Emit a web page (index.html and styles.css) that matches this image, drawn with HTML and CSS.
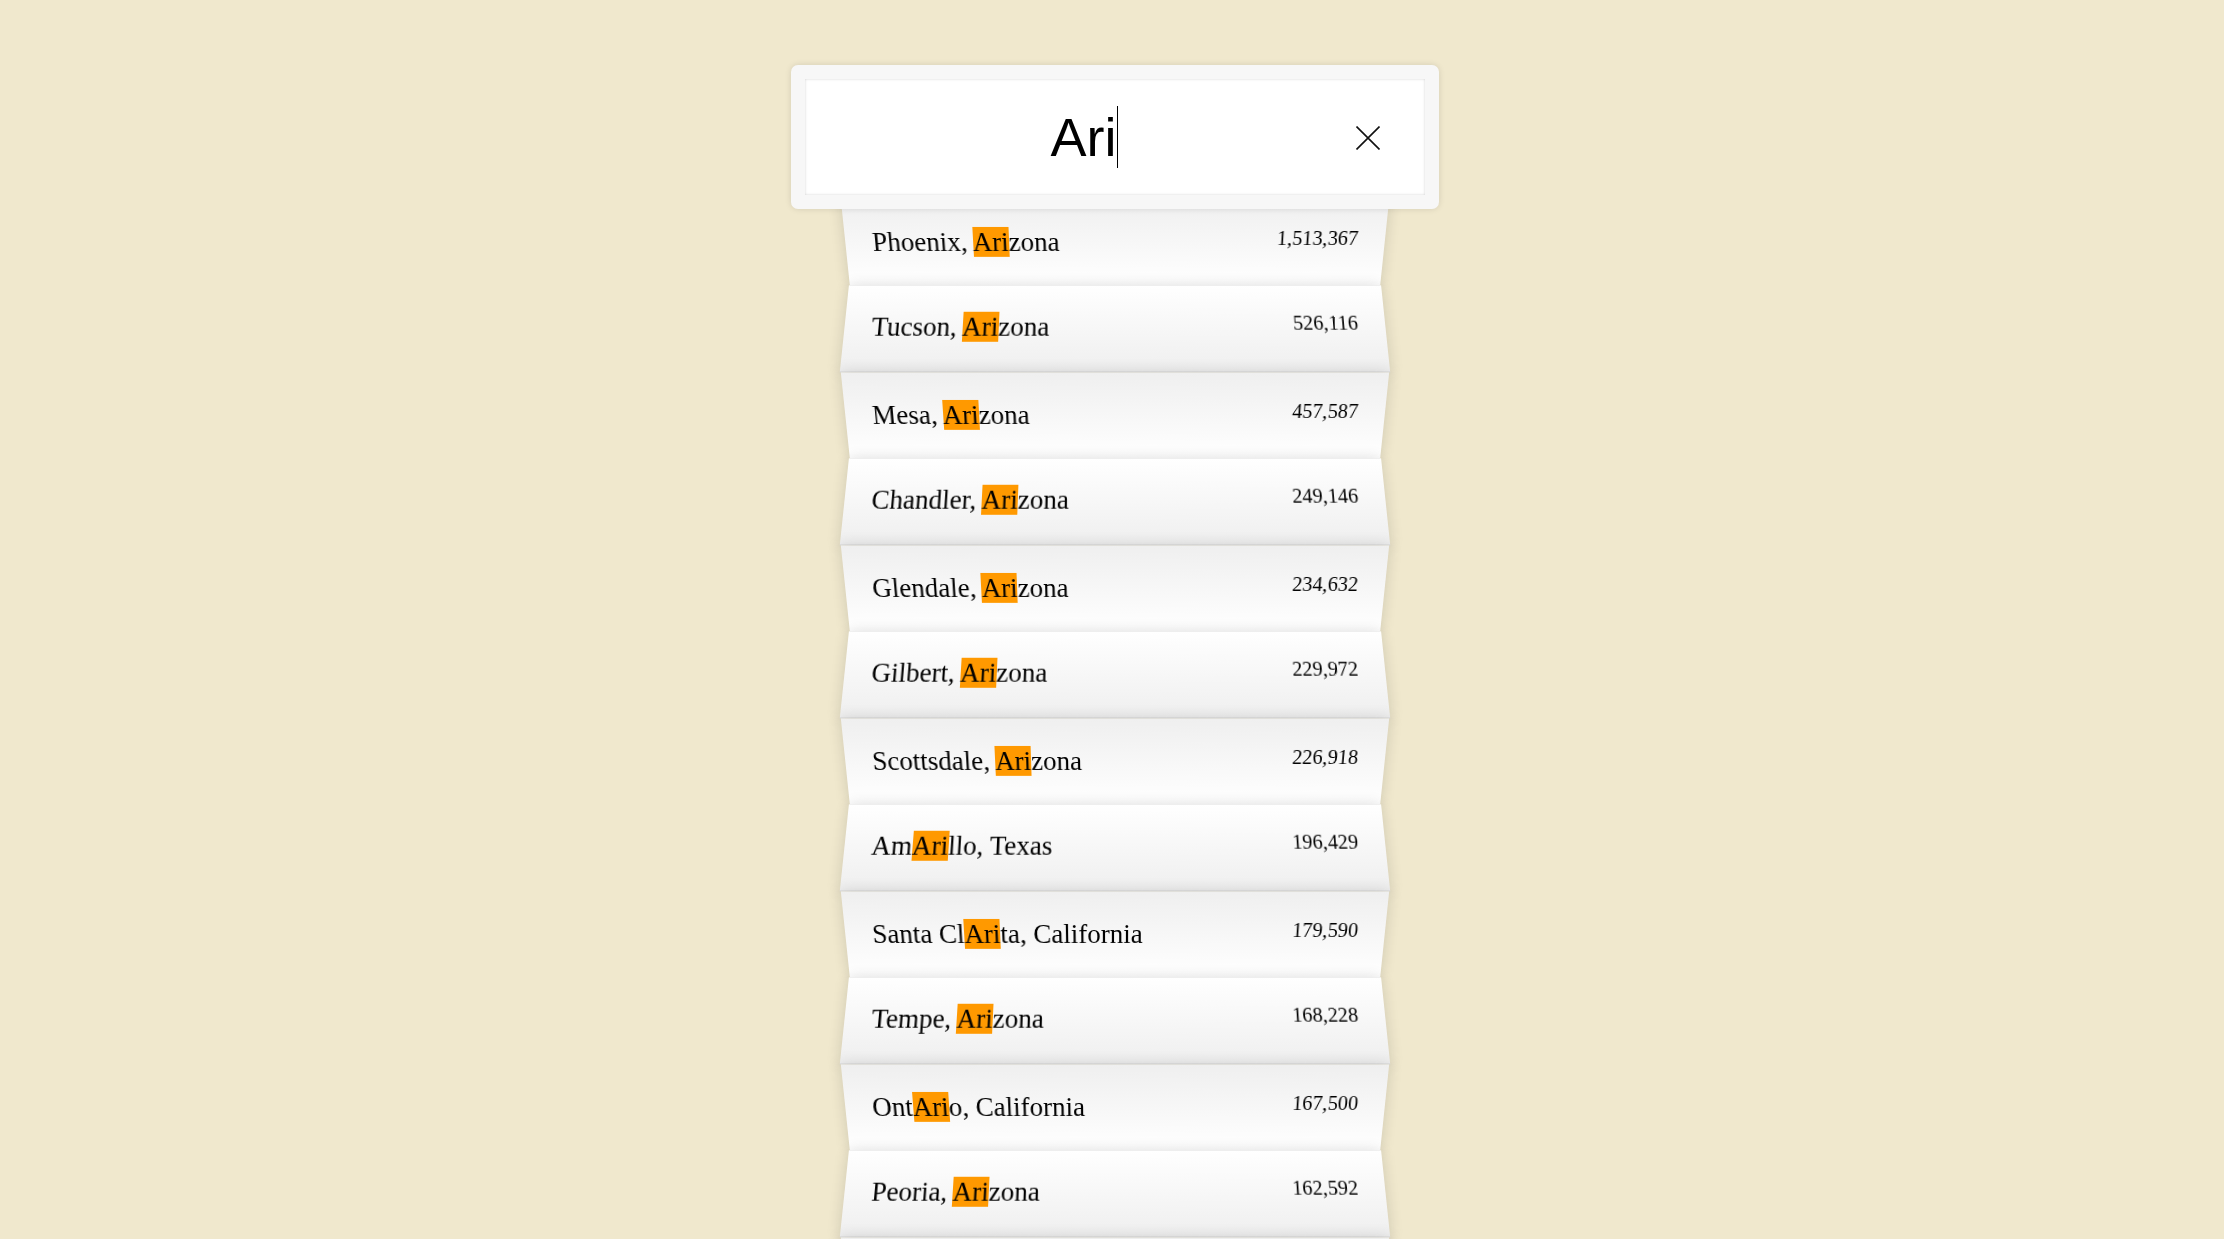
FILE: index.html
```html
<!DOCTYPE html>
<html lang="en">
<head>
<meta charset="UTF-8">
<title>Type Ahead</title>
<link rel="stylesheet" href="styles.css">
</head>
<body>
<form class="search-form">
  <div class="search">
    <div class="search-text"><span class="typed">Ari</span><span class="caret"></span></div>
    <div class="search-clear">
      <svg width="24" height="24" viewBox="0 0 24 24"><path d="M0.5 0.5 L23.5 23.5 M23.5 0.5 L0.5 23.5" stroke="#111" stroke-width="1.6" fill="none"/></svg>
    </div>
  </div>
  <ul class="suggestions">
    <li><span class="name">Phoenix, <span class="hl">Ari</span>zona</span><span class="population">1,513,367</span></li>
    <li><span class="name">Tucson, <span class="hl">Ari</span>zona</span><span class="population">526,116</span></li>
    <li><span class="name">Mesa, <span class="hl">Ari</span>zona</span><span class="population">457,587</span></li>
    <li><span class="name">Chandler, <span class="hl">Ari</span>zona</span><span class="population">249,146</span></li>
    <li><span class="name">Glendale, <span class="hl">Ari</span>zona</span><span class="population">234,632</span></li>
    <li><span class="name">Gilbert, <span class="hl">Ari</span>zona</span><span class="population">229,972</span></li>
    <li><span class="name">Scottsdale, <span class="hl">Ari</span>zona</span><span class="population">226,918</span></li>
    <li><span class="name">Am<span class="hl">Ari</span>llo, Texas</span><span class="population">196,429</span></li>
    <li><span class="name">Santa Cl<span class="hl">Ari</span>ta, California</span><span class="population">179,590</span></li>
    <li><span class="name">Tempe, <span class="hl">Ari</span>zona</span><span class="population">168,228</span></li>
    <li><span class="name">Ont<span class="hl">Ari</span>o, California</span><span class="population">167,500</span></li>
    <li><span class="name">Peoria, <span class="hl">Ari</span>zona</span><span class="population">162,592</span></li>
    <li class="tail"></li>
  </ul>
</form>
</body>
</html>
```
FILE: styles.css
```css
html {
  box-sizing: border-box;
  background: #f0e8cd;
  font-family: "Liberation Serif", "Times New Roman", serif;
  font-size: 27px;
}
*, *::before, *::after {
  box-sizing: inherit;
}
body {
  margin: 0;
  padding-left: 5.5px;
  overflow: hidden;
}
.search-form {
  max-width: 540px;
  margin: 51.5px auto 0;
}
.search {
  position: relative;
  left: -10%;
  top: 13.5px;
  z-index: 2;
  width: 120%;
  display: flex;
  align-items: center;
  padding: 27px;
  border: 14.5px solid #f7f7f7;
  border-radius: 7px;
  background: #fff;
  font-family: "Liberation Sans", Arial, sans-serif;
  font-size: 54px;
  line-height: 62px;
  color: #000;
  box-shadow: 0 0 6.75px rgba(0, 0, 0, 0.12), inset 0 0 2.7px rgba(0, 0, 0, 0.19);
}
.search-text {
  flex: 1;
  display: flex;
  justify-content: center;
  align-items: center;
  height: 62px;
}
.caret {
  display: inline-block;
  width: 1.5px;
  height: 62px;
  background: #000;
}
.search-clear {
  width: 61px;
  height: 62px;
  display: flex;
  align-items: center;
  justify-content: center;
}
.search-clear svg {
  display: block;
  margin-left: 1px;
  margin-top: 2px;
}
.suggestions {
  margin: 0;
  padding: 0;
  position: relative;
}
.suggestions li {
  list-style: none;
  border-bottom: 1px solid #d8d8d8;
  box-shadow: 0 0 13.5px rgba(0, 0, 0, 0.14);
  margin: 0;
  padding: 27px;
  display: flex;
  justify-content: space-between;
  line-height: 31.5px;
  color: #000;
}
.suggestions li.tail {
  height: 86.5px;
}
.suggestions li:nth-child(even) {
  transform: perspective(135px) rotateX(3deg) translateY(2.7px) scale(1.001);
  background: linear-gradient(to bottom, #ffffff 0%, #efefef 100%);
}
.suggestions li:nth-child(odd) {
  transform: perspective(135px) rotateX(-3deg) translateY(4px);
  background: linear-gradient(to top, #ffffff 0%, #efefef 100%);
}
.population {
  font-size: 20.25px;
  line-height: 23px;
}
.hl {
  background: #ff9900;
}
```
